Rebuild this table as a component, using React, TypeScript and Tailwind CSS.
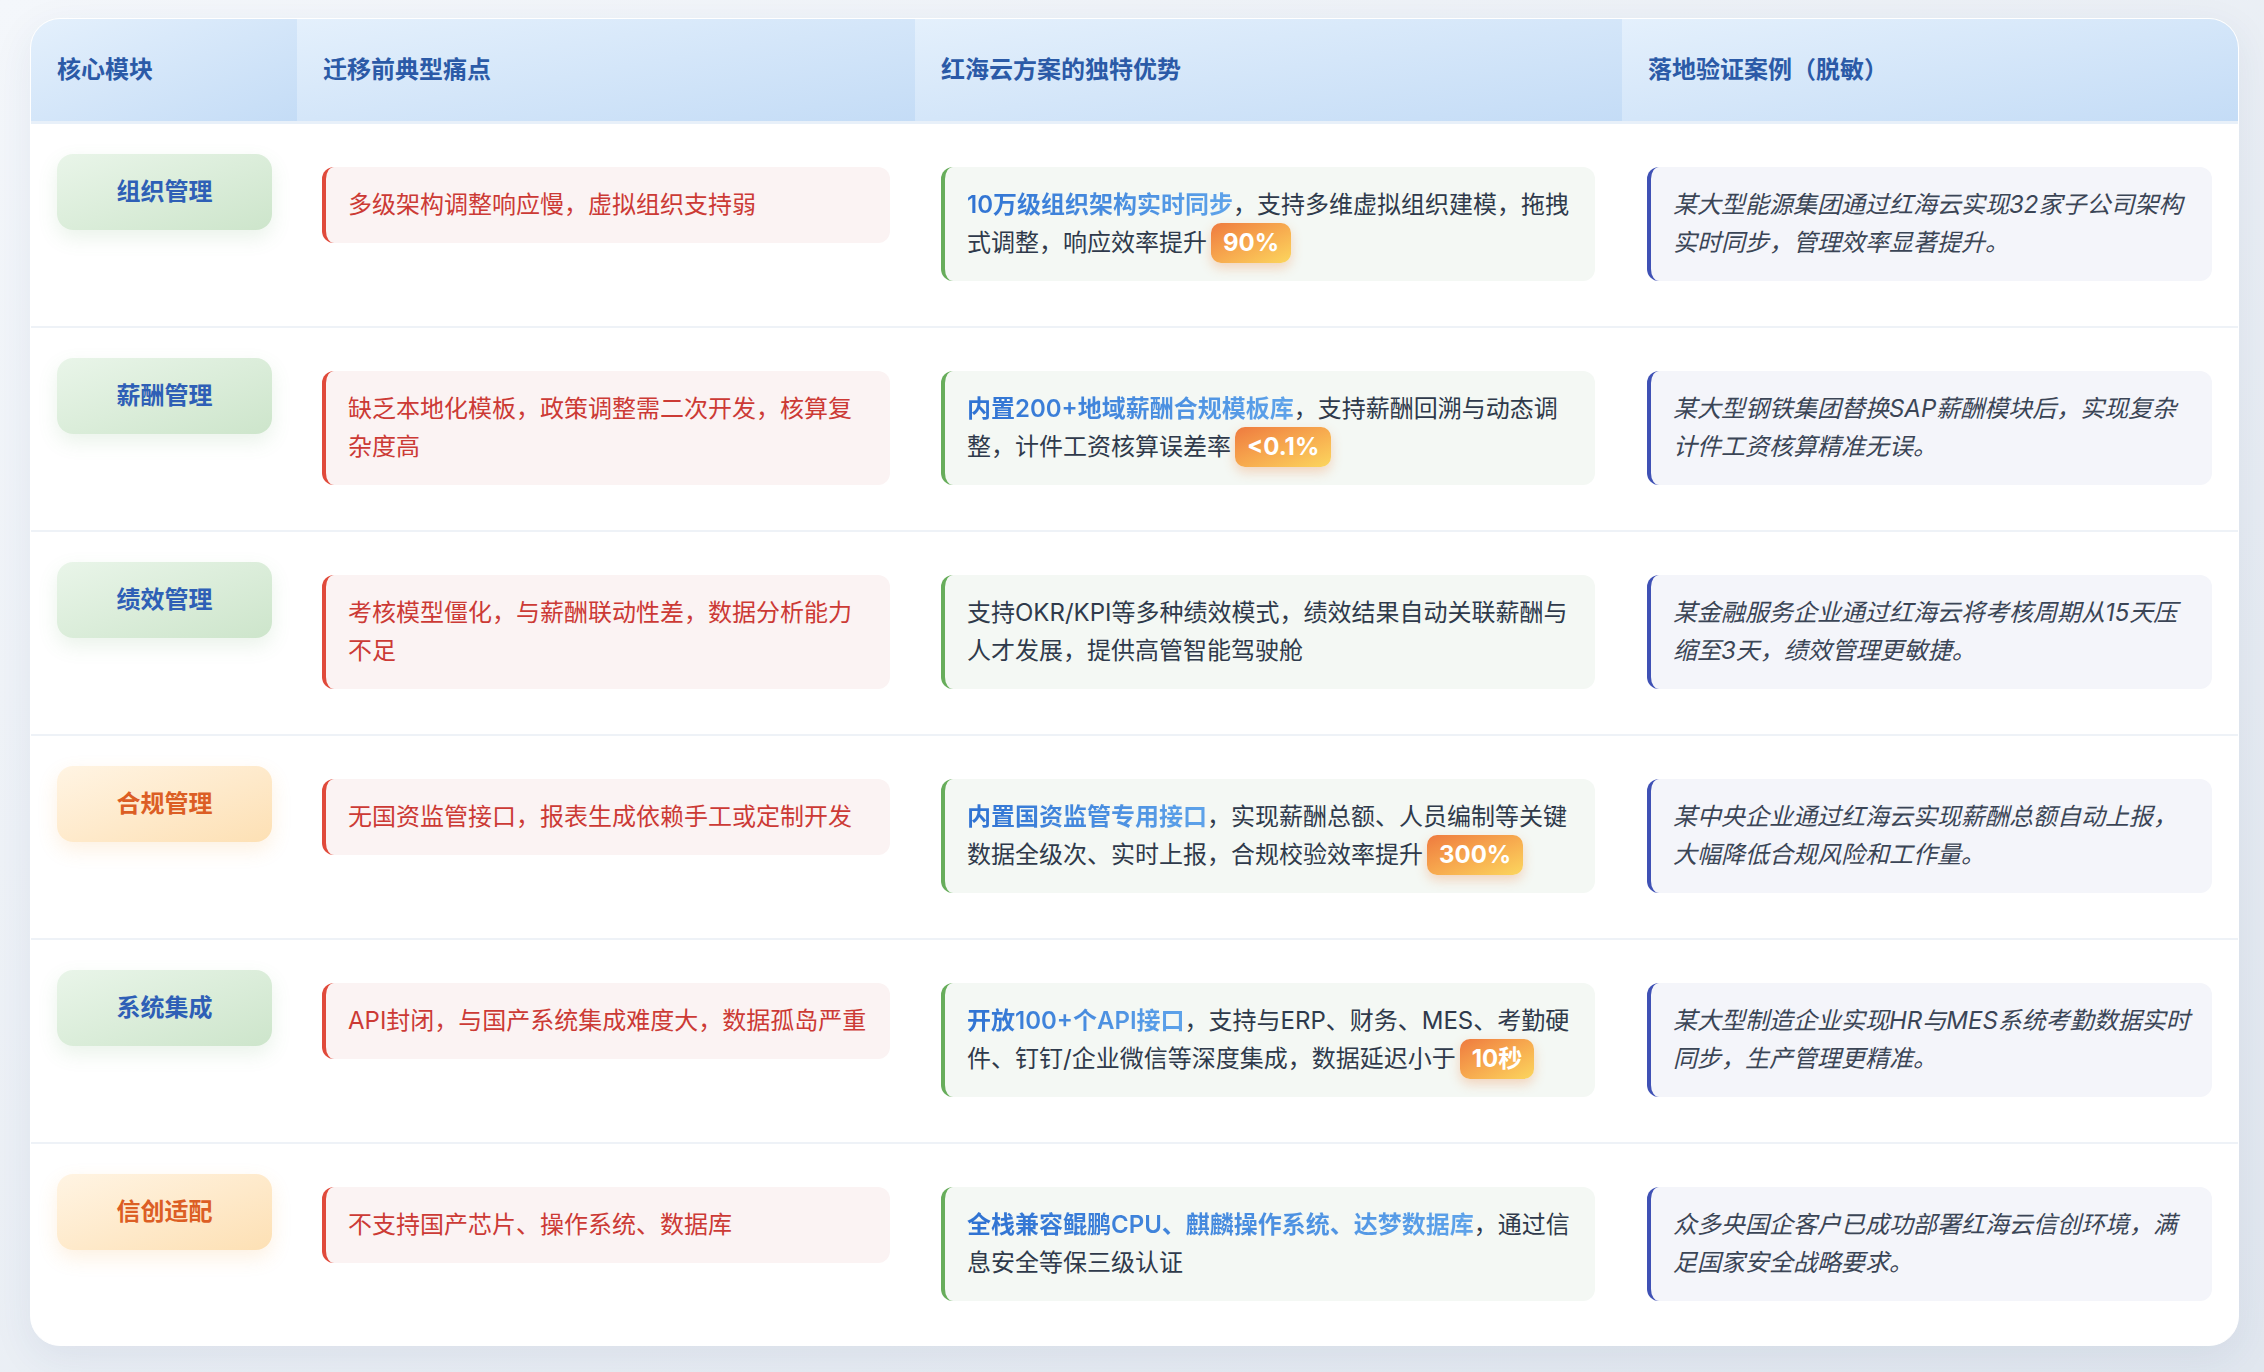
import React from 'react';

type Row = {
  module: string;
  tone: 'green' | 'orange';
  pain: string;
  adv: { hl?: string; text: string; badge?: string };
  case: string;
};

const rows: Row[] = [
  {
    module: '组织管理',
    tone: 'green',
    pain: '多级架构调整响应慢，虚拟组织支持弱',
    adv: { hl: '10万级组织架构实时同步', text: '，支持多维虚拟组织建模，拖拽式调整，响应效率提升', badge: '90%' },
    case: '某大型能源集团通过红海云实现32家子公司架构实时同步，管理效率显著提升。',
  },
  {
    module: '薪酬管理',
    tone: 'green',
    pain: '缺乏本地化模板，政策调整需二次开发，核算复杂度高',
    adv: { hl: '内置200+地域薪酬合规模板库', text: '，支持薪酬回溯与动态调整，计件工资核算误差率', badge: '<0.1%' },
    case: '某大型钢铁集团替换SAP薪酬模块后，实现复杂计件工资核算精准无误。',
  },
  {
    module: '绩效管理',
    tone: 'green',
    pain: '考核模型僵化，与薪酬联动性差，数据分析能力不足',
    adv: { text: '支持OKR/KPI等多种绩效模式，绩效结果自动关联薪酬与人才发展，提供高管智能驾驶舱' },
    case: '某金融服务企业通过红海云将考核周期从15天压缩至3天，绩效管理更敏捷。',
  },
  {
    module: '合规管理',
    tone: 'orange',
    pain: '无国资监管接口，报表生成依赖手工或定制开发',
    adv: { hl: '内置国资监管专用接口', text: '，实现薪酬总额、人员编制等关键数据全级次、实时上报，合规校验效率提升', badge: '300%' },
    case: '某中央企业通过红海云实现薪酬总额自动上报，大幅降低合规风险和工作量。',
  },
  {
    module: '系统集成',
    tone: 'green',
    pain: 'API封闭，与国产系统集成难度大，数据孤岛严重',
    adv: { hl: '开放100+个API接口', text: '，支持与ERP、财务、MES、考勤硬件、钉钉/企业微信等深度集成，数据延迟小于', badge: '10秒' },
    case: '某大型制造企业实现HR与MES系统考勤数据实时同步，生产管理更精准。',
  },
  {
    module: '信创适配',
    tone: 'orange',
    pain: '不支持国产芯片、操作系统、数据库',
    adv: { hl: '全栈兼容鲲鹏CPU、麒麟操作系统、达梦数据库', text: '，通过信息安全等保三级认证' },
    case: '众多央国企客户已成功部署红海云信创环境，满足国家安全战略要求。',
  },
];

const headers = ['核心模块', '迁移前典型痛点', '红海云方案的独特优势', '落地验证案例（脱敏）'];

const cols = 'grid grid-cols-[266px_618px_707px_618px]';

export default function App() {
  return (
    <div
      className="h-[1372px] w-full overflow-hidden bg-linear-to-br from-[#f4f7fb] to-[#e1e7ef] pl-[30px] pt-[18px]"
      style={{ fontFamily: 'Inter, "Noto Sans CJK SC", sans-serif' }}
    >
      <div className="w-[2209px] overflow-hidden rounded-[30px] border border-white bg-white shadow-[0_12px_40px_rgba(40,70,120,0.08)]">
        <div className={`${cols} border-b-[3px] border-[#e8f0f9]`}>
          {headers.map((h) => (
            <div
              key={h}
              className="flex h-[102px] items-center bg-linear-to-br from-[#e4f0fc] to-[#c4dcf6] px-[26px] text-[24px] font-bold text-[#2b5aa7]"
            >
              {h}
            </div>
          ))}
        </div>

        {rows.map((r, i) => (
          <div
            key={r.module}
            className={`${cols} ${i < rows.length - 1 ? 'h-[204px] border-b-2 border-[#eef2f7]' : 'h-[201px]'}`}
          >
            <div className="px-[26px] pt-[30px]">
              <div
                className={`flex h-[76px] w-[215px] items-center justify-center rounded-[16px] text-[24px] font-bold ${
                  r.tone === 'green'
                    ? 'bg-linear-to-br from-[#e9f5e9] to-[#cde5cb] text-[#2e5fb6] shadow-[0_8px_20px_rgba(90,160,90,0.13)]'
                    : 'bg-linear-to-br from-[#fff4e3] to-[#fde0b4] text-[#dc5e24] shadow-[0_8px_20px_rgba(240,160,60,0.15)]'
                }`}
              >
                {r.module}
              </div>
            </div>

            <div className="px-[25px] pt-[43px]">
              <div className="rounded-[12px] border-l-4 border-[#e04a3b] bg-[#fbf3f3] py-[19px] pl-[22px] pr-[22px] text-[24px] leading-[38px] text-[#cc3a35]">
                {r.pain}
              </div>
            </div>

            <div className="pl-[26px] pr-[27px] pt-[43px]">
              <div className="rounded-[12px] border-l-4 border-[#67ad5b] bg-[#f4f8f4] py-[19px] pl-[22px] pr-[22px] text-[24px] leading-[38px] text-[#2f3a4b]">
                {r.adv.hl && (
                  <span className="bg-linear-to-r from-[#2f72d2] to-[#5ea3ea] bg-clip-text font-semibold text-transparent">
                    {r.adv.hl}
                  </span>
                )}
                {r.adv.text}
                {r.adv.badge && (
                  <span className="-my-px ml-1 inline-block rounded-[10px] bg-linear-to-br from-[#ee7a3f] to-[#fbd65e] px-3 py-px font-bold text-white shadow-[0_5px_12px_rgba(240,130,60,0.3)]">
                    {r.adv.badge}
                  </span>
                )}
              </div>
            </div>

            <div className="pl-[25px] pr-[28px] pt-[43px]">
              <div className="rounded-[12px] border-l-4 border-[#3f51b5] bg-[#f4f5fa] py-[19px] pl-[22px] pr-[18px] text-[24px] italic leading-[38px] text-[#3b4556]">
                {r.case}
              </div>
            </div>
          </div>
        ))}
      </div>
    </div>
  );
}
